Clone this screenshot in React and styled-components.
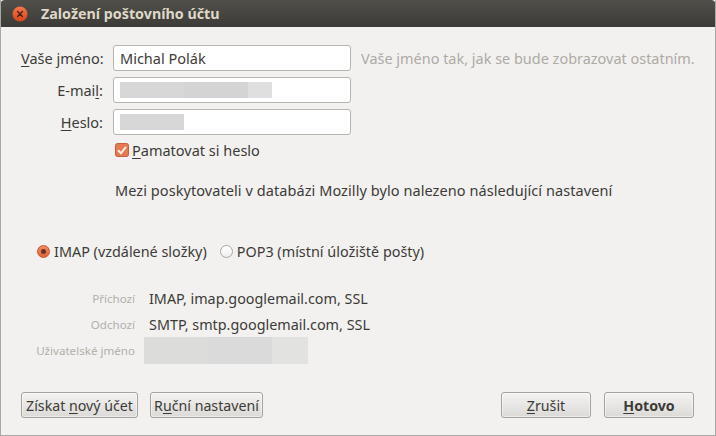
import React from 'react';
import styled, { createGlobalStyle } from 'styled-components';

const GlobalStyle = createGlobalStyle`
  html, body {
    margin: 0;
    padding: 0;
    background: #f2f1f0;
  }
`;

const Window = styled.div`
  width: 716px;
  height: 436px;
  box-sizing: border-box;
  display: flex;
  flex-direction: column;
  background: #f2f1f0;
  color: #3c3b37;
  font-family: "Noto Sans", "Open Sans", sans-serif;
  font-size: 14.5px;
  border: 1px solid #a9a8a5;
  border-top: 0;
  overflow: hidden;
`;

const TitleBar = styled.div`
  height: 27px;
  margin: 0 -1px;
  flex: none;
  display: flex;
  align-items: center;
  gap: 13px;
  padding-left: 12px;
  background: linear-gradient(#514f4a, #3c3b37);
  border-radius: 5px 5px 0 0;
`;

const CloseButton = styled.svg`
  width: 16px;
  height: 16px;
  flex: none;
`;

const Title = styled.span`
  font-weight: 700;
  font-size: 14.3px;
  color: #dfd8c8;
`;

const Body = styled.div`
  flex: 1;
  display: flex;
  flex-direction: column;
  padding: 18px 21px 0 20px;
`;

const FormGrid = styled.div`
  display: grid;
  grid-template-columns: 82px 238px auto;
  column-gap: 10px;
  row-gap: 6px;
  align-items: center;
`;

const FieldLabel = styled.label`
  text-align: right;
  white-space: nowrap;
`;

const Key = styled.span`
  text-decoration: underline;
  text-underline-offset: 2px;
  text-decoration-thickness: 1px;
`;

const Input = styled.div`
  height: 26px;
  box-sizing: border-box;
  border: 1px solid #b8b6b1;
  border-radius: 3px;
  background: #fff;
  padding-left: 6px;
  display: flex;
  align-items: center;
`;

// redacted part of a field: one grey block per blurred chunk of text
const Blur = styled.div`
  width: ${(p) => p.$w}px;
  height: 16px;
  background: ${(p) => p.$bg};
`;

const Hint = styled.span`
  color: #aeaaa4;
  white-space: nowrap;
  font-size: 14.46px;
`;

const CheckRow = styled.div`
  display: flex;
  align-items: center;
  gap: 3px;
  margin: 5px 0 0 94px;
  height: 20px;
`;

const CheckBox = styled.svg`
  width: 14px;
  height: 14px;
  flex: none;
`;

const Notice = styled.div`
  margin: 20px 0 0 94px;
  height: 20px;
  line-height: 20px;
  white-space: nowrap;
  letter-spacing: 0.07px;
`;

const RadioRow = styled.div`
  display: flex;
  align-items: center;
  margin: 41px 0 0 16px;
  height: 20px;
  gap: 13px;
  font-size: 14.4px;
`;

const RadioItem = styled.div`
  display: flex;
  align-items: center;
  gap: 4px;
  white-space: nowrap;
`;

const Radio = styled.span`
  width: 13px;
  height: 13px;
  box-sizing: border-box;
  border-radius: 50%;
  display: flex;
  align-items: center;
  justify-content: center;
  border: 1px solid ${(p) => (p.$on ? '#c9532b' : '#a8a6a1')};
  background: ${(p) => (p.$on ? 'linear-gradient(#f08a63, #e0653a)' : 'linear-gradient(#ffffff, #f0efee)')};
  &::after {
    content: '';
    display: ${(p) => (p.$on ? 'block' : 'none')};
    width: 5px;
    height: 5px;
    border-radius: 50%;
    background: #6b3522;
  }
`;

const InfoGrid = styled.div`
  display: grid;
  grid-template-columns: 114px auto;
  column-gap: 14px;
  grid-auto-rows: 26px;
  align-items: center;
  margin-top: 24px;
`;

const InfoLabel = styled.span`
  text-align: right;
  color: #b3afa9;
  font-size: 11.6px;
  white-space: nowrap;
`;

const InfoValue = styled.span`
  white-space: nowrap;
  font-size: 14.36px;
`;

const UserBlur = styled.div`
  width: 164px;
  height: 27px;
  margin-left: -5px;
  background: linear-gradient(90deg, #dcdcdb 0 64px, #dadada 64px 128px, #e2e2e1 128px);
`;

const ButtonRow = styled.div`
  display: flex;
  align-items: center;
  margin-top: 29px;
`;

const Button = styled.div`
  height: 26px;
  width: ${(p) => p.$w}px;
  margin-left: ${(p) => p.$ml || 0}px;
  box-sizing: border-box;
  border: 1px solid #a5a39f;
  border-radius: 3px;
  background: linear-gradient(#f4f3f2, #dcdad7);
  box-shadow: inset 0 0 0 1px rgba(255, 255, 255, 0.45);
  display: flex;
  align-items: center;
  justify-content: center;
  white-space: nowrap;
  font-size: 14.2px;
  font-weight: ${(p) => (p.$primary ? 700 : 400)};
`;

const Spacer = styled.div`
  flex: 1;
`;

export default function App() {
  return (
    <>
      <GlobalStyle />
      <Window>
        <TitleBar>
          <CloseButton viewBox="0 0 16 16">
            <defs>
              <linearGradient id="closeFill" x1="0" y1="0" x2="0" y2="1">
                <stop offset="0" stopColor="#f4764a" />
                <stop offset="1" stopColor="#d9451a" />
              </linearGradient>
            </defs>
            <circle cx="8" cy="8" r="7.5" fill="url(#closeFill)" />
            <path d="M5.6 5.6l4.8 4.8M10.4 5.6l-4.8 4.8" stroke="#4a2114" strokeWidth="1.4" strokeLinecap="round" />
          </CloseButton>
          <Title>Založení poštovního účtu</Title>
        </TitleBar>
        <Body>
          <FormGrid>
            <FieldLabel><Key>V</Key>aše jméno:</FieldLabel>
            <Input>Michal Polák</Input>
            <Hint>Vaše jméno tak, jak se bude zobrazovat ostatním.</Hint>
            <FieldLabel>E-mai<Key>l</Key>:</FieldLabel>
            <Input><Blur $w={152} $bg="linear-gradient(90deg, #d6d7d6 0 64px, #d3d4d3 64px 128px, #dedfde 128px)" /></Input>
            <span />
            <FieldLabel><Key>H</Key>eslo:</FieldLabel>
            <Input><Blur $w={64} $bg="#d6d7d6" /></Input>
            <span />
          </FormGrid>
          <CheckRow>
            <CheckBox viewBox="0 0 14 14">
              <rect x="0.5" y="0.5" width="13" height="13" rx="2" fill="#e8784f" stroke="#c0603c" />
              <path d="M3 7.2l3 3 5-6.4" fill="none" stroke="#f8efe6" strokeWidth="2" />
            </CheckBox>
            <span><Key>P</Key>amatovat si heslo</span>
          </CheckRow>
          <Notice>Mezi poskytovateli v databázi Mozilly bylo nalezeno následující nastavení</Notice>
          <RadioRow>
            <RadioItem><Radio $on />IMAP (vzdálené složky)</RadioItem>
            <RadioItem><Radio />POP3 (místní úložiště pošty)</RadioItem>
          </RadioRow>
          <InfoGrid>
            <InfoLabel>Příchozí</InfoLabel>
            <InfoValue>IMAP, imap.googlemail.com, SSL</InfoValue>
            <InfoLabel>Odchozí</InfoLabel>
            <InfoValue>SMTP, smtp.googlemail.com, SSL</InfoValue>
            <InfoLabel>Uživatelské jméno</InfoLabel>
            <UserBlur />
          </InfoGrid>
          <ButtonRow>
            <Button $w={117}><span>Získat <Key>n</Key>ový účet</span></Button>
            <Button $w={113} $ml={12}><span>R<Key>u</Key>ční nastavení</span></Button>
            <Spacer />
            <Button $w={90}><span><Key>Z</Key>rušit</span></Button>
            <Button $w={90} $ml={13} $primary><span><Key>H</Key>otovo</span></Button>
          </ButtonRow>
        </Body>
      </Window>
    </>
  );
}
